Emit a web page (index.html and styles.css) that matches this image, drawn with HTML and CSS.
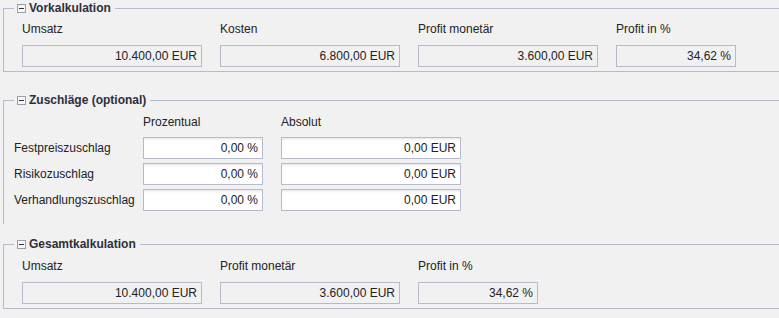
FILE: index.html
```html
<!DOCTYPE html>
<html lang="de">
<head>
    <meta charset="UTF-8">
    <title>Kalkulation</title>
    <link rel="stylesheet" href="styles.css">
</head>
<body>

    <fieldset class="group">
        <legend><span class="toggle"></span>Vorkalkulation</legend>
        <div class="summary four">
            <div class="caption">Umsatz</div>
            <div class="caption">Kosten</div>
            <div class="caption">Profit monetär</div>
            <div class="caption">Profit in %</div>
            <div class="field">10.400,00 EUR</div>
            <div class="field">6.800,00 EUR</div>
            <div class="field">3.600,00 EUR</div>
            <div class="field">34,62 %</div>
        </div>
    </fieldset>

    <fieldset class="group surcharges">
        <legend><span class="toggle"></span>Zuschläge (optional)</legend>
        <div class="surcharge-grid">
            <div></div>
            <div class="caption">Prozentual</div>
            <div class="caption">Absolut</div>

            <div class="row-label">Festpreiszuschlag</div>
            <div class="field editable">0,00 %</div>
            <div class="field editable">0,00 EUR</div>

            <div class="row-label">Risikozuschlag</div>
            <div class="field editable">0,00 %</div>
            <div class="field editable">0,00 EUR</div>

            <div class="row-label">Verhandlungszuschlag</div>
            <div class="field editable">0,00 %</div>
            <div class="field editable">0,00 EUR</div>
        </div>
    </fieldset>

    <fieldset class="group total">
        <legend><span class="toggle"></span>Gesamtkalkulation</legend>
        <div class="summary three">
            <div class="caption">Umsatz</div>
            <div class="caption">Profit monetär</div>
            <div class="caption">Profit in %</div>
            <div class="field">10.400,00 EUR</div>
            <div class="field">3.600,00 EUR</div>
            <div class="field">34,62 %</div>
        </div>
    </fieldset>

</body>
</html>
```

FILE: styles.css
```css
body {
    margin: 0;
    padding-top: 1px;
    background-color: #f1f1f1;
    font-family: "Liberation Sans", Arial, sans-serif;
    font-size: 12px;
    line-height: 14px;
    color: #222;
}

.group {
    margin: 0 0 0 3px;
    padding: 7px 0 4px 0;
    border: 1px solid #b7b9cc;
    border-right: none;
    min-width: 0;
}

.group legend {
    margin-left: 10px;
    padding: 0 4px 0 3px;
    font-weight: bold;
    color: #2e2e3a;
    line-height: 14px;
    display: flex;
    align-items: center;
}

.toggle {
    width: 7px;
    height: 7px;
    border: 1px solid #9c9caa;
    background-color: #f7f7f7;
    margin-right: 3px;
    position: relative;
}

.toggle::after {
    content: "";
    position: absolute;
    left: 1px;
    right: 1px;
    top: 3px;
    height: 1px;
    background-color: #333;
}

.summary {
    display: grid;
    column-gap: 18px;
    row-gap: 9px;
    padding-left: 18px;
}

.summary.four {
    grid-template-columns: 180px 180px 180px 120px;
}

.summary.three {
    grid-template-columns: 180px 180px 120px;
}

.field {
    height: 20px;
    line-height: 20px;
    border: 1px solid #b7b9cc;
    text-align: right;
    padding-right: 4px;
    white-space: nowrap;
}

.field.editable {
    background-color: #fff;
    box-shadow: inset 0 3px 3px -2px #e2e2e8;
}

.surcharges {
    margin-top: 21px;
    padding: 8px 0 13px 0;
    border-bottom: none;
}

.surcharge-grid {
    display: grid;
    grid-template-columns: 111px 120px 180px;
    column-gap: 18px;
    row-gap: 4px;
    padding-left: 10px;
}

.surcharge-grid .caption {
    margin-bottom: 4px;
}

.row-label {
    line-height: 22px;
    white-space: nowrap;
}

.total {
    margin-top: 13px;
    padding-top: 8px;
}
```
